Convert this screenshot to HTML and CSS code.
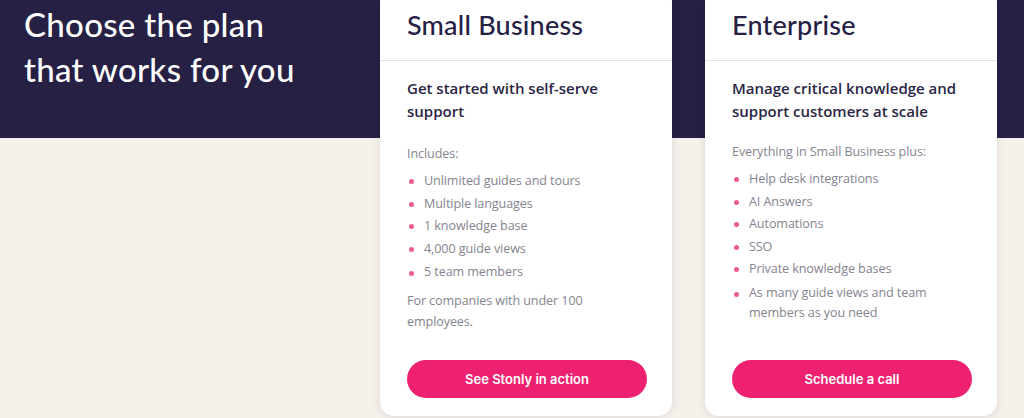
FILE: index.html
```html
<!DOCTYPE html>
<html lang="en">
<head>
<meta charset="utf-8">
<title>Pricing plans</title>
<link rel="stylesheet" href="styles.css">
</head>
<body>
<main class="page">
  <div class="intro">
    <h1 class="intro-title">Choose the plan that works for you</h1>
  </div>
  <div class="cards">
    <article class="card">
      <header class="card-head">
        <h2 class="card-title">Small Business</h2>
      </header>
      <div class="card-body">
        <p class="card-lead">Get started with self-serve support</p>
        <p class="card-note">Includes:</p>
        <ul class="features">
          <li>Unlimited guides and tours</li>
          <li>Multiple languages</li>
          <li>1 knowledge base</li>
          <li>4,000 guide views</li>
          <li>5 team members</li>
        </ul>
        <p class="card-foot">For companies with under 100 employees.</p>
        <a class="cta" href="#">See Stonly in action</a>
      </div>
    </article>
    <article class="card">
      <header class="card-head">
        <h2 class="card-title">Enterprise</h2>
      </header>
      <div class="card-body">
        <p class="card-lead">Manage critical knowledge and support customers at scale</p>
        <p class="card-note card-note-alt">Everything in Small Business plus:</p>
        <ul class="features">
          <li>Help desk integrations</li>
          <li>AI Answers</li>
          <li>Automations</li>
          <li>SSO</li>
          <li>Private knowledge bases</li>
          <li>As many guide views and team members as you need</li>
        </ul>
        <a class="cta" href="#">Schedule a call</a>
      </div>
    </article>
  </div>
</main>
</body>
</html>
```

FILE: styles.css
```css
* { box-sizing: border-box; }

html, body {
  margin: 0;
  padding: 0;
}

body {
  width: 1024px;
  height: 418px;
  overflow: hidden;
  font-family: "Open Sans", "Noto Sans", sans-serif;
  background: linear-gradient(to bottom, #262045 0, #262045 138px, #f5f0ea 138px, #f5f0ea 100%);
}

.page {
  display: flex;
  align-items: flex-start;
  padding-left: 24px;
}

.intro {
  width: 356px;
  flex: none;
}

.intro-title {
  margin: 2px 0 0;
  width: 290px;
  font-family: "Lato", "Inter", sans-serif;
  font-weight: 500;
  font-size: 33px;
  line-height: 45px;
  color: #ffffff;
  letter-spacing: 0.3px;
}

.cards {
  display: flex;
  gap: 33px;
  margin-top: -12px;
}

.card {
  width: 292px;
  height: 428px;
  background: #ffffff;
  border-radius: 14px;
  box-shadow: 0 1px 8px rgba(30, 20, 60, 0.10);
  display: flex;
  flex-direction: column;
}

.card-head {
  height: 73px;
  padding: 20px 27px 0;
  border-bottom: 1px solid #e2e1e6;
}

.card-title {
  margin: 0;
  font-family: "Lato", "Inter", sans-serif;
  font-weight: 500;
  font-size: 27px;
  line-height: 34px;
  color: #262045;
  letter-spacing: 0.2px;
}

.card-body {
  flex: 1;
  display: flex;
  flex-direction: column;
  padding: 16px 26px 18px 27px;
}

.card-lead {
  margin: 0;
  font-size: 15px;
  font-weight: 600;
  line-height: 23px;
  color: #2a2545;
}

.card-note {
  margin: 20px 0 0;
  font-size: 12.6px;
  line-height: 22px;
  color: #85848f;
  letter-spacing: -0.1px;
}

.card-note-alt {
  margin-top: 18px;
}

.features {
  list-style: none;
  margin: 5px 0 0;
  padding: 0;
}

.features li {
  position: relative;
  padding-left: 17px;
  font-size: 12.6px;
  line-height: 22.5px;
  color: #85848f;
  letter-spacing: -0.1px;
  max-width: 215px;
}

.features li:last-child {
  line-height: 20px;
  margin-top: 2px;
}

.features li::before {
  content: "";
  position: absolute;
  left: 2px;
  top: 9px;
  width: 5px;
  height: 5px;
  border-radius: 50%;
  background: #ec5b8e;
}

.card-foot {
  margin: 8px 0 0;
  font-size: 12.6px;
  line-height: 21px;
  color: #85848f;
  letter-spacing: -0.1px;
  max-width: 190px;
}

.cta {
  margin-top: auto;
  display: flex;
  align-items: center;
  justify-content: center;
  width: 240px;
  height: 38px;
  border-radius: 19px;
  background: #ee2170;
  color: #ffffff;
  font-family: "Inter", "Liberation Sans", sans-serif;
  font-weight: 600;
  font-size: 13px;
  text-decoration: none;
}
```
